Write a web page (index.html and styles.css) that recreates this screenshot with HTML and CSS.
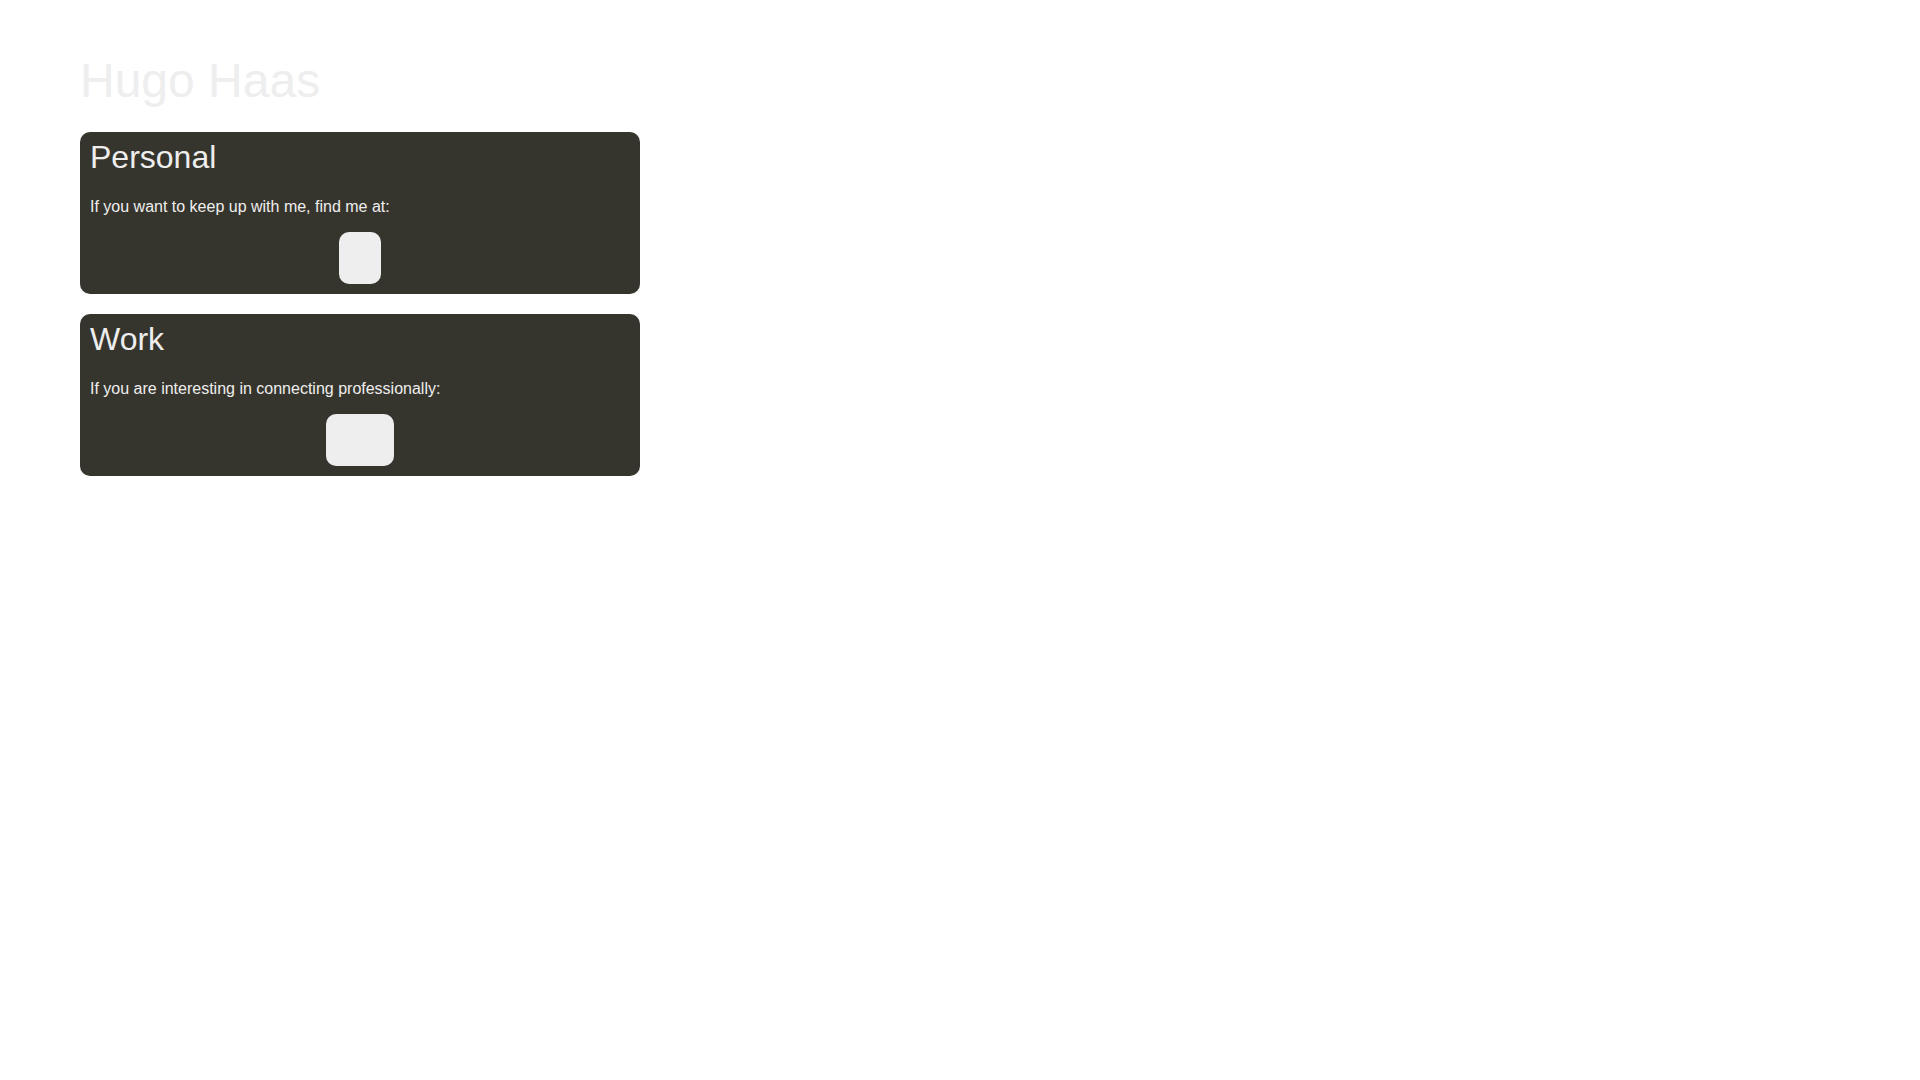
FILE: index.html
```html
<!DOCTYPE html>
<html lang="en">
<head>
<meta charset="utf-8">
<title>Hugo Haas</title>
<link rel="stylesheet" href="styles.css">
</head>
<body>
<main class="page">
  <h1 class="name">Hugo Haas</h1>
  <section class="card">
    <h2 class="card-title">Personal</h2>
    <p class="card-text">If you want to keep up with me, find me at:</p>
    <div class="links"></div>
  </section>
  <section class="card">
    <h2 class="card-title">Work</h2>
    <p class="card-text">If you are interesting in connecting professionally:</p>
    <div class="links links-wide"></div>
  </section>
</main>
</body>
</html>
```
FILE: styles.css
```css
body {
  margin: 0;
  background: #fff;
  color: #eee;
  font: 16px/30px "Liberation Sans", Arial, sans-serif;
}
.page {
  display: flex;
  flex-direction: column;
  gap: 20px;
  max-width: 560px;
  padding: 50px 80px;
}
.name {
  margin: 0;
  font-size: 48px;
  line-height: 62px;
  font-weight: 400;
}
.card {
  display: flex;
  flex-direction: column;
  padding: 10px;
  border-radius: 10px;
  background: #36352d;
}
.card-title {
  margin: 0 0 20px;
  font-size: 32px;
  line-height: 30px;
  font-weight: 400;
}
.card-text {
  margin: 0 0 10px;
}
.links {
  align-self: center;
  width: 42px;
  height: 52px;
  border-radius: 10px;
  background: #eee;
}
.links-wide {
  width: 68px;
}
```
